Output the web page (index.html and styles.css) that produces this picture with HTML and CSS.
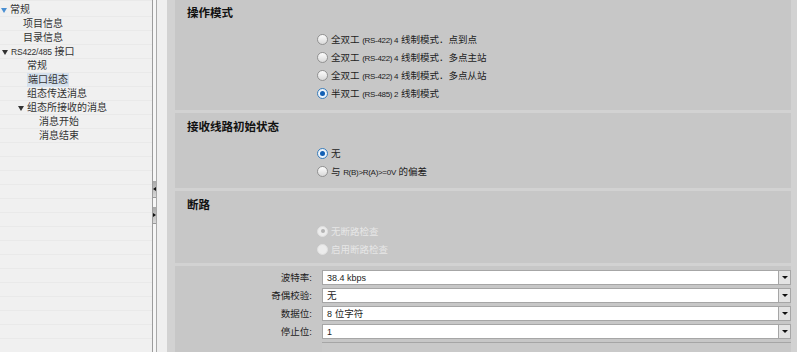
FILE: index.html
```html
<!DOCTYPE html>
<html lang="zh-CN">
<head>
<meta charset="utf-8">
<title>RS422/485 端口组态</title>
<link rel="stylesheet" href="styles.css">
</head>
<body>
<nav class="tree">
  <div class="row lvl0"><svg class="tri" width="6" height="5" viewBox="0 0 6 5"><path d="M0 0H6L3 5Z" fill="#4a8fd2"/></svg>常规</div>
  <div class="row lvl1">项目信息</div>
  <div class="row lvl1">目录信息</div>
  <div class="row lvl0b"><svg class="tri" width="6" height="5" viewBox="0 0 6 5"><path d="M0 0H6L3 5Z" fill="#333"/></svg><span class="lat">RS422/485</span>&nbsp;接口</div>
  <div class="row lvl2">常规</div>
  <div class="row lvl2"><span class="sel">端口组态</span></div>
  <div class="row lvl2">组态传送消息</div>
  <div class="row lvl1b"><svg class="tri" width="6" height="5" viewBox="0 0 6 5"><path d="M0 0H6L3 5Z" fill="#333"/></svg>组态所接收的消息</div>
  <div class="row lvl3">消息开始</div>
  <div class="row lvl3">消息结束</div>
</nav>
<div class="splitter">
  <div class="rail">
    <div class="sbtn sbtn-first"><span class="arr-l"></span></div>
    <div class="sbtn"><span class="arr-r"></span></div>
  </div>
  <div class="spad"></div>
</div>
<main class="content">
  <section class="sec sec-first">
    <h2>操作模式</h2>
    <div class="opts">
      <div class="opt"><span class="radio"></span><span class="txt">全双工 <span class="sm">(RS-422) 4</span> 线制模式．点到点</span></div>
      <div class="opt"><span class="radio"></span><span class="txt">全双工 <span class="sm">(RS-422) 4</span> 线制模式．多点主站</span></div>
      <div class="opt"><span class="radio"></span><span class="txt">全双工 <span class="sm">(RS-422) 4</span> 线制模式．多点从站</span></div>
      <div class="opt"><span class="radio on"><i></i></span><span class="txt">半双工 <span class="sm">(RS-485) 2</span> 线制模式</span></div>
    </div>
  </section>
  <section class="sec">
    <h2>接收线路初始状态</h2>
    <div class="opts">
      <div class="opt"><span class="radio on"><i></i></span><span class="txt">无</span></div>
      <div class="opt"><span class="radio"></span><span class="txt">与 <span class="sm">R(B)&gt;R(A)&gt;=0V</span> 的偏差</span></div>
    </div>
  </section>
  <section class="sec sec-third">
    <h2>断路</h2>
    <div class="opts">
      <div class="opt dis"><span class="radio on"><i></i></span><span class="txt">无断路检查</span></div>
      <div class="opt dis"><span class="radio"></span><span class="txt">启用断路检查</span></div>
    </div>
  </section>
  <section class="fields">
    <label class="lbl">波特率:</label>
    <div class="combo"><span class="val"><span class="num">38.4 kbps</span></span><span class="dd"><b></b></span></div>
    <label class="lbl">奇偶校验:</label>
    <div class="combo"><span class="val">无</span><span class="dd"><b></b></span></div>
    <label class="lbl">数据位:</label>
    <div class="combo"><span class="val"><span class="num">8</span> 位字符</span><span class="dd"><b></b></span></div>
    <label class="lbl">停止位:</label>
    <div class="combo"><span class="val"><span class="num">1</span></span><span class="dd"><b></b></span></div>
    <span class="lbl"></span>
    <div class="combo combo-cut"></div>
  </section>
</main>
</body>
</html>
```
FILE: styles.css
```css
* { box-sizing: border-box; }
html, body { margin: 0; padding: 0; }
body {
  width: 797px;
  height: 352px;
  overflow: hidden;
  display: flex;
  font-family: "Liberation Sans", "Noto Sans CJK SC", sans-serif;
  font-size: 9.5px;
  color: #1c1c1c;
  background: #d2d2d2;
}

/* tree */
.tree {
  width: 152px;
  flex: none;
  padding-top: 3px;
  background-color: #f0f0f0;
  background-image: repeating-linear-gradient(to bottom, #f0f0f0 0, #f0f0f0 13px, #e9e9e9 13px, #e9e9e9 14px);
  background-position: 0 3px;
  color: #333;
  font-size: 10px;
}
.row {
  height: 14px;
  line-height: 14px;
  display: flex;
  align-items: center;
  white-space: nowrap;
}
.tri { flex: none; margin-right: 3px; }
.lvl0 { padding-left: 1px; }
.lvl0b { padding-left: 2px; }
.lvl1 { padding-left: 23px; }
.lvl2 { padding-left: 27px; }
.lvl1b { padding-left: 18px; }
.lvl3 { padding-left: 39px; }
.lat { font-size: 8.5px; letter-spacing: -0.2px; }
.sel { background: #d5e1ee; padding: 0 1px; }

/* splitter */
.splitter { width: 15px; flex: none; display: flex; }
.rail {
  width: 5px;
  border-left: 1px solid #9c9c9c;
  border-right: 1px solid #a9a9a9;
  background: #f6f6f6;
  display: flex;
  flex-direction: column;
}
.sbtn {
  height: 17px;
  margin-top: 9px;
  background: linear-gradient(#a8a8a8, #d8d8d8);
  border-bottom: 1px solid #9a9a9a;
  display: flex;
  align-items: center;
  justify-content: center;
}
.sbtn-first { margin-top: 181px; }
.arr-l { width: 0; height: 0; border-top: 2px solid transparent; border-bottom: 2px solid transparent; border-right: 3px solid #111; }
.arr-r { width: 0; height: 0; border-top: 2px solid transparent; border-bottom: 2px solid transparent; border-left: 3px solid #111; }
.spad { flex: 1; background: #efefef; }

/* content */
.content {
  flex: 1;
  background: #d2d2d2;
  padding: 0 6px 0 8px;
  display: flex;
  flex-direction: column;
  gap: 3px;
  overflow: hidden;
}
.sec {
  background: #c7c7c7;
  padding: 6px 0 8px 0;
  flex: none;
}
.sec-first { margin-top: -1px; }
.sec-third { padding-bottom: 5px; }
.sec h2 {
  margin: 0 0 0 12px;
  font-size: 11.5px;
  line-height: 16px;
  font-weight: bold;
  color: #111;
}
.opts { margin-top: 9px; padding-left: 142px; }
.opt {
  height: 18px;
  display: flex;
  align-items: center;
  gap: 3px;
}
.txt { white-space: nowrap; }
.sm { font-size: 8px; letter-spacing: -0.3px; }
.radio {
  width: 11px;
  height: 11px;
  border-radius: 50%;
  border: 1px solid #929292;
  background: linear-gradient(#fdfdfd, #d9d9d9);
  display: flex;
  align-items: center;
  justify-content: center;
  flex: none;
}
.radio.on {
  border-color: #3d7fbd;
  background: radial-gradient(circle, #ffffff 0, #dbe9f6 100%);
}
.radio.on i {
  display: block;
  width: 5px;
  height: 5px;
  border-radius: 50%;
  background: #1260b4;
}
.dis { color: #e6e6e6; }
.dis .radio { border-color: #e0e0e0; background: #ececec; }
.dis .radio.on i { width: 4px; height: 4px; background: #b4b4b4; }

/* fields */
.fields {
  background: #c7c7c7;
  flex: 1;
  padding-top: 4px;
  display: grid;
  grid-template-columns: 137px 1fr;
  column-gap: 10px;
  row-gap: 3px;
  align-content: start;
}
.lbl {
  text-align: right;
  height: 15px;
  line-height: 15px;
  color: #1c1c1c;
}
.combo { display: flex; height: 15px; }
.combo-cut { border-top: 1px solid #a6a6a6; background: #c9c9c9; }
.val {
  flex: 1;
  background: #fff;
  border: 1px solid #a6a6a6;
  padding-left: 4px;
  line-height: 13px;
  white-space: pre;
}
.num { font-size: 9px; }
.dd {
  width: 12px;
  flex: none;
  background: #e3e3e3;
  border: 1px solid #a6a6a6;
  border-left: none;
  display: flex;
  align-items: center;
  justify-content: center;
}
.dd b {
  width: 0;
  height: 0;
  border-left: 3px solid transparent;
  border-right: 3px solid transparent;
  border-top: 3px solid #111;
}
```
